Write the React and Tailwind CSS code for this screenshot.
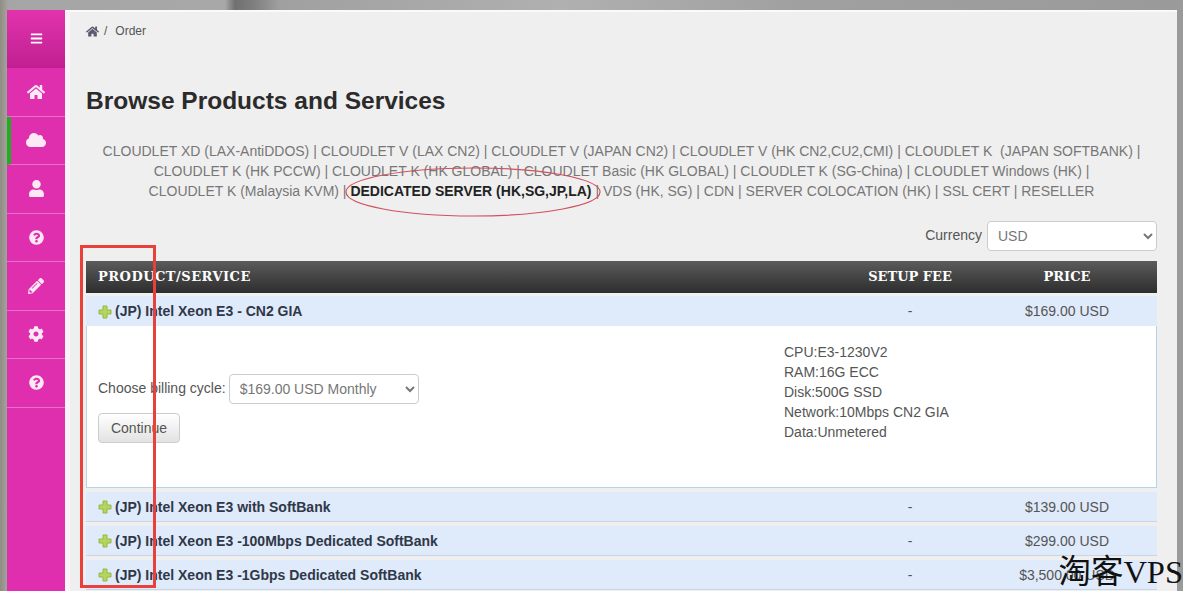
import { FaBars, FaHome, FaCloud, FaUser, FaQuestionCircle, FaPencilAlt, FaCog } from 'react-icons/fa'

const NAV = [
  { icon: FaHome, size: 18 },
  { icon: FaCloud, size: 20, active: true },
  { icon: FaUser, size: 17 },
  { icon: FaQuestionCircle, size: 15 },
  { icon: FaPencilAlt, size: 16 },
  { icon: FaCog, size: 16 },
  { icon: FaQuestionCircle, size: 15 },
]

const LINK_LINES = [
  'CLOUDLET XD (LAX-AntiDDOS) | CLOUDLET V (LAX CN2) | CLOUDLET V (JAPAN CN2) | CLOUDLET V (HK CN2,CU2,CMI) | CLOUDLET K\u00a0 (JAPAN SOFTBANK) |',
  'CLOUDLET K (HK PCCW) | CLOUDLET K (HK GLOBAL) | CLOUDLET Basic (HK GLOBAL) | CLOUDLET K (SG-China) | CLOUDLET Windows (HK) |',
]

const PRODUCTS = [
  { name: '(JP) Intel Xeon E3 with SoftBank', price: '$139.00 USD' },
  { name: '(JP) Intel Xeon E3 -100Mbps Dedicated SoftBank', price: '$299.00 USD' },
  { name: '(JP) Intel Xeon E3 -1Gbps Dedicated SoftBank', price: '$3,500.00 USD' },
]

const SPECS = ['CPU:E3-1230V2', 'RAM:16G ECC', 'Disk:500G SSD', 'Network:10Mbps CN2 GIA', 'Data:Unmetered']

function PlusIcon() {
  return (
    <svg className="w-[14px] h-[14px] shrink-0" viewBox="0 0 14 14">
      <path d="M5 1h4v4h4v4H9v4H5V9H1V5h4z" fill="#b3d65c" stroke="#96b842" strokeWidth="1" />
    </svg>
  )
}

function ProductRow({ name, price, open }) {
  return (
    <div
      className={`grid grid-cols-[1fr_134px_180px] items-center h-[30px] pt-[1px] bg-[#dfeafa] text-[14px] ${
        open ? '' : 'border-b border-[#c6d6e6]'
      }`}
    >
      <div className="flex items-center gap-[3px] pl-[12px] font-bold text-[#2f3848]">
        <PlusIcon />
        {name}
      </div>
      <div className="text-center text-[#555]">-</div>
      <div className="text-center text-[#555]">{price}</div>
    </div>
  )
}

export default function App() {
  return (
    <div className="relative h-[591px] overflow-hidden flex pt-[10px] pl-[7px] pr-[6px] bg-[linear-gradient(90deg,#8f8c80_0,#a5a5a5_8px,#a8a8a8_225px,#707070_235px,#808080_255px,#a0a0a0_280px,#b0b0b0_560px,#a0a0a0_800px,#9a9a9a_100%)] font-['Liberation_Sans',Arial,sans-serif]">
      {/* Sidebar */}
      <aside className="w-[58px] shrink-0 bg-[#e02fae] flex flex-col">
        <div className="h-[58px] pb-[2px] flex items-center justify-center text-white bg-gradient-to-b from-[#e233ad] to-[#c01f92]">
          <FaBars size={13} />
        </div>
        {NAV.map((item, i) => {
          const Icon = item.icon
          return (
            <div
              key={i}
              className={`h-[48.5px] flex items-center justify-center text-[#fbeaf6] border-b border-[#ea6fc6] ${
                item.active ? 'border-l-[4px] border-l-[#1fae1f] pr-[4px]' : ''
              }`}
            >
              <Icon size={item.size} />
            </div>
          )
        })}
      </aside>

      {/* Main */}
      <main className="flex-1 bg-[#efefef] border-t-2 border-l-[5px] border-t-[#fafafa] border-l-[#f8f4f8] pl-[16px] pr-[20px] text-[#666] text-[14px]">
        <div className="flex items-center gap-[5px] mt-[11px] h-[16px] text-[12px] text-[#555]">
          <FaHome size={13} className="text-[#5a5a70]" />
          <span>/</span>
          <span className="ml-[3px]">Order</span>
        </div>

        <h1 className="mt-[47px] text-[24.5px] leading-[30px] font-bold text-[#2b2b2b]">Browse Products and Services</h1>

        <div className="mt-[25px] text-center leading-[20px] text-[#777] whitespace-nowrap">
          {LINK_LINES.map((line) => (
            <div key={line}>{line}</div>
          ))}
          <div>
            CLOUDLET K (Malaysia KVM) | <b className="text-[#222]">DEDICATED SERVER (HK,SG,JP,LA)</b> | VDS (HK, SG) | CDN | SERVER COLOCATION (HK) | SSL CERT | RESELLER
          </div>
        </div>

        <div className="flex items-center justify-end gap-[5px] mt-[20px] text-[#555]">
          <span className="pb-[2px]">Currency</span>
          <select className="w-[170px] h-[30px] pl-[6px] bg-white border border-[#ccc] rounded-[4px] text-[14px] text-[#777]">
            <option>USD</option>
          </select>
        </div>

        {/* Products table */}
        <div className="mt-[10px]">
          <div className="grid grid-cols-[1fr_134px_180px] items-center h-[32px] bg-gradient-to-b from-[#5c5c5c] to-[#2e2e2e] text-white font-bold text-[13px] font-['DejaVu_Serif',serif]">
            <div className="pl-[12px] tracking-[0.5px]">PRODUCT/SERVICE</div>
            <div className="text-center">SETUP FEE</div>
            <div className="text-center">PRICE</div>
          </div>

          <div className="mt-[3px]">
            <ProductRow name="(JP) Intel Xeon E3 - CN2 GIA" price="$169.00 USD" open />
          </div>

          <div className="h-[162px] bg-white border border-t-0 border-[#b9d3e6] flex">
            <div className="w-[697px] pl-[11px] pt-[48px]">
              <div className="flex items-center gap-[3px] text-[#555]">
                <span className="pb-[2px]">Choose billing cycle:</span>
                <select className="w-[190px] h-[30px] pl-[6px] bg-white border border-[#ccc] rounded-[4px] text-[14px] text-[#777]">
                  <option>$169.00 USD Monthly</option>
                </select>
              </div>
              <button className="mt-[9px] w-[82px] h-[30px] border border-[#ccc] rounded-[4px] bg-gradient-to-b from-white to-[#e2e2e2] text-[#555]">
                Continue
              </button>
            </div>
            <div className="pt-[16px] leading-[20px] text-[#555]">
              {SPECS.map((s) => (
                <div key={s}>{s}</div>
              ))}
            </div>
          </div>

          <div className="flex flex-col gap-[4px] mt-[4px]">
            {PRODUCTS.map((p) => (
              <ProductRow key={p.name} name={p.name} price={p.price} />
            ))}
          </div>
        </div>
      </main>

      {/* Hand-drawn annotations on top of the screenshot */}
      <div className="absolute left-[80px] top-[245px] w-[76px] h-[343px] border-[3px] border-[#e8403a]" />
      <svg className="absolute left-[340px] top-[160px]" width="270" height="60" viewBox="0 0 270 60" fill="none">
        <ellipse cx="133" cy="32" rx="127" ry="24" stroke="#d2505f" strokeWidth="1.2" />
      </svg>
      <div className="absolute right-0 bottom-0 text-[32.5px] leading-[37px] text-[#111] font-['Liberation_Serif','Noto_Sans_CJK_SC',serif]">
        淘客VPS
      </div>
    </div>
  )
}
